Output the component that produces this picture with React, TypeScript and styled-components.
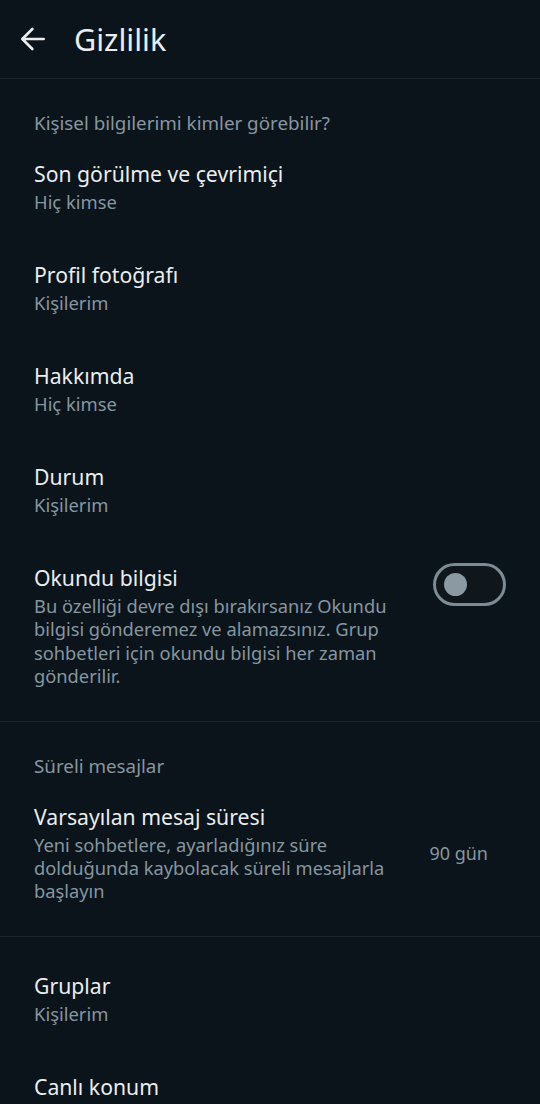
import React from 'react';
import styled, { createGlobalStyle } from 'styled-components';

const GlobalStyle = createGlobalStyle`
  html, body {
    margin: 0;
    padding: 0;
    background: #0b141a;
  }
  body {
    font-family: 'Noto Sans', Roboto, 'Liberation Sans', sans-serif;
    -webkit-font-smoothing: antialiased;
  }
`;

interface Setting {
  title: string;
  value: string;
}

const whoCanSee: Setting[] = [
  { title: 'Son görülme ve çevrimiçi', value: 'Hiç kimse' },
  { title: 'Profil fotoğrafı', value: 'Kişilerim' },
  { title: 'Hakkımda', value: 'Hiç kimse' },
  { title: 'Durum', value: 'Kişilerim' },
];

const ArrowLeft = () => (
  <svg width="32" height="32" viewBox="0 0 24 24" fill="none">
    <path
      d="M20 12H4.5M11.5 4.5L4 12l7.5 7.5"
      stroke="#e9edef"
      strokeWidth="2"
      strokeLinecap="round"
      strokeLinejoin="round"
    />
  </svg>
);

const Privacy = () => {
  return (
    <Page>
      <GlobalStyle />
      <Header>
        <BackButton>
          <ArrowLeft />
        </BackButton>
        <HeaderTitle>Gizlilik</HeaderTitle>
      </Header>

      <Section>
        <SectionTitle>Kişisel bilgilerimi kimler görebilir?</SectionTitle>
        {whoCanSee.map((item) => (
          <Row key={item.title}>
            <RowText>
              <RowTitle>{item.title}</RowTitle>
              <RowValue>{item.value}</RowValue>
            </RowText>
          </Row>
        ))}
        <Row $alignTop>
          <RowText>
            <RowTitle>Okundu bilgisi</RowTitle>
            <RowDesc>
              Bu özelliği devre dışı bırakırsanız Okundu bilgisi gönderemez ve
              alamazsınız. Grup sohbetleri için okundu bilgisi her zaman
              gönderilir.
            </RowDesc>
          </RowText>
          <Switch aria-checked={false}>
            <Knob />
          </Switch>
        </Row>
      </Section>

      <Section>
        <SectionTitle>Süreli mesajlar</SectionTitle>
        <Row>
          <RowText>
            <RowTitle>Varsayılan mesaj süresi</RowTitle>
            <RowDesc>
              Yeni sohbetlere, ayarladığınız süre dolduğunda kaybolacak süreli
              mesajlarla başlayın
            </RowDesc>
          </RowText>
          <TrailingValue>90 gün</TrailingValue>
        </Row>
      </Section>

      <Section $plain>
        <Row>
          <RowText>
            <RowTitle>Gruplar</RowTitle>
            <RowValue>Kişilerim</RowValue>
          </RowText>
        </Row>
        <Row>
          <RowText>
            <RowTitle>Canlı konum</RowTitle>
          </RowText>
        </Row>
      </Section>
    </Page>
  );
};

export default Privacy;

const Page = styled.div`
  width: 540px;
  height: 1104px;
  overflow: hidden;
  background: #0b141a;
  color: #e9edef;
`;

const Header = styled.header`
  display: flex;
  align-items: center;
  height: 78px;
  padding: 0 0 0 17px;
  border-bottom: 1px solid #1d262d;
`;

const BackButton = styled.div`
  display: flex;
  align-items: center;
  justify-content: center;
  width: 32px;
  height: 32px;
  margin-right: 25px;
`;

const HeaderTitle = styled.h1`
  margin: 0;
  font-size: 30.5px;
  font-weight: 400;
  line-height: 36px;
  color: #e9edef;
`;

const Section = styled.section<{ $plain?: boolean }>`
  padding: ${(p) => (p.$plain ? '12px 0 0' : '32px 0 10px')};
  border-bottom: 1px solid #1d262d;
`;

const SectionTitle = styled.div`
  padding: 0 34px 2px;
  font-size: 18.8px;
  line-height: 24px;
  color: #8696a0;
`;

const Row = styled.div<{ $alignTop?: boolean }>`
  display: flex;
  align-items: ${(p) => (p.$alignTop ? 'flex-start' : 'center')};
  gap: 20px;
  padding: 23px 34px;
`;

const RowText = styled.div`
  flex: 1;
  min-width: 0;
`;

const RowTitle = styled.div`
  font-size: 21.2px;
  line-height: 28px;
  color: #e9edef;
`;

const RowValue = styled.div`
  font-size: 18.4px;
  line-height: 27px;
  color: #8696a0;
`;

const RowDesc = styled.div`
  margin-top: 2px;
  max-width: 366px;
  font-size: 18.3px;
  line-height: 23.4px;
  color: #8696a0;
`;

const TrailingValue = styled.div`
  margin-right: 18px;
  font-size: 18px;
  color: #8696a0;
  white-space: nowrap;
`;

const Switch = styled.div`
  box-sizing: border-box;
  flex-shrink: 0;
  display: flex;
  align-items: center;
  width: 73px;
  height: 43px;
  margin-top: -1px;
  padding-left: 8px;
  border: 3px solid #7d8b94;
  border-radius: 22px;
  background: #0f171d;
`;

const Knob = styled.div`
  width: 23px;
  height: 23px;
  border-radius: 50%;
  background: #8a99a2;
`;
